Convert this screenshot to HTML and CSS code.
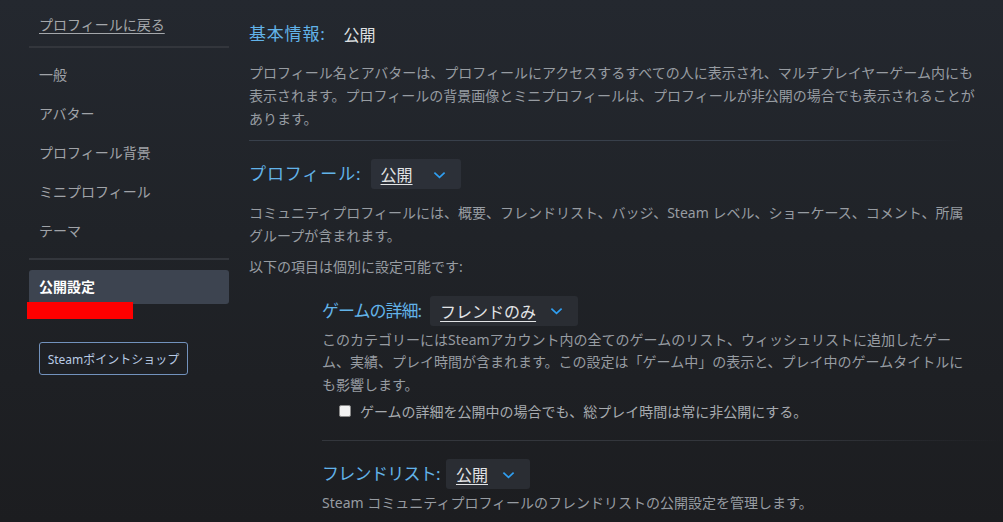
FILE: index.html
```html
<!DOCTYPE html>
<html lang="ja">
<head>
<meta charset="utf-8">
<title>プライバシー設定</title>
<link rel="stylesheet" href="styles.css">
</head>
<body>
<div class="page">
  <nav class="sidebar">
    <a class="back-link">プロフィールに戻る</a>
    <div class="side-divider"></div>
    <ul class="side-list">
      <li class="side-item">一般</li>
      <li class="side-item">アバター</li>
      <li class="side-item">プロフィール背景</li>
      <li class="side-item">ミニプロフィール</li>
      <li class="side-item">テーマ</li>
    </ul>
    <div class="side-divider second"></div>
    <div class="side-active">公開設定</div>
    <div class="redact"></div>
    <button class="points-btn">Steamポイントショップ</button>
  </nav>

  <main class="content">
    <div class="head-row first">
      <span class="label l-basic">基本情報:</span>
      <span class="static-value">公開</span>
    </div>
    <p class="desc p1">プロフィール名とアバターは、プロフィールにアクセスするすべての人に表示され、マルチプレイヤーゲーム内にも<br>表示されます。プロフィールの背景画像とミニプロフィールは、プロフィールが非公開の場合でも表示されることが<br>あります。</p>
    <div class="divider d1"></div>

    <div class="head-row r2">
      <span class="label l-profile">プロフィール:</span>
      <span class="dropdown w-profile"><span class="dd-text">公開</span><svg class="chev" viewBox="0 0 14 8" width="13" height="8"><path d="M1.5 1.5 L7 6.5 L12.5 1.5" fill="none" stroke="#2f9ff2" stroke-width="1.8"/></svg></span>
    </div>
    <p class="desc p2">コミュニティプロフィールには、概要、フレンドリスト、バッジ、Steam レベル、ショーケース、コメント、所属<br>グループが含まれます。</p>
    <p class="desc p3">以下の項目は個別に設定可能です:</p>

    <section class="sub">
      <div class="head-row r3">
        <span class="label l-game">ゲームの詳細:</span>
        <span class="dropdown w-game"><span class="dd-text">フレンドのみ</span><svg class="chev" viewBox="0 0 14 8" width="13" height="8"><path d="M1.5 1.5 L7 6.5 L12.5 1.5" fill="none" stroke="#2f9ff2" stroke-width="1.8"/></svg></span>
      </div>
      <p class="desc p4">このカテゴリーにはSteamアカウント内の全てのゲームのリスト、ウィッシュリストに追加したゲー<br>ム、実績、プレイ時間が含まれます。この設定は「ゲーム中」の表示と、プレイ中のゲームタイトルに<br>も影響します。</p>
      <label class="check-row"><span class="checkbox"></span><span>ゲームの詳細を公開中の場合でも、総プレイ時間は常に非公開にする。</span></label>
      <div class="divider d2"></div>
      <div class="head-row r4">
        <span class="label l-friend">フレンドリスト:</span>
        <span class="dropdown w-friend"><span class="dd-text">公開</span><svg class="chev" viewBox="0 0 14 8" width="13" height="8"><path d="M1.5 1.5 L7 6.5 L12.5 1.5" fill="none" stroke="#2f9ff2" stroke-width="1.8"/></svg></span>
      </div>
      <p class="desc p5">Steam コミュニティプロフィールのフレンドリストの公開設定を管理します。</p>
    </section>
  </main>
</div>
</body>
</html>
```

FILE: styles.css
```css
* { box-sizing: border-box; }
html, body {
  margin: 0;
  padding: 0;
  height: 100%;
}
body {
  background: linear-gradient(180deg, #24282f 0%, #202328 45%, #1c1d20 100%);
  font-family: "Noto Sans", "Noto Sans CJK JP", sans-serif;
  color: #9a9ea4;
  overflow: hidden;
}
.page {
  display: flex;
  width: 1003px;
  height: 522px;
}
.sidebar {
  width: 229px;
  padding-left: 29px;
  display: flex;
  flex-direction: column;
  flex-shrink: 0;
}
.back-link {
  display: block;
  padding-left: 10px;
  margin-top: 14px;
  font-size: 14px;
  line-height: 22px;
  color: #a4a7ab;
  text-decoration: underline;
  text-underline-offset: 3px;
}
.side-divider {
  height: 2px;
  background: #33363c;
  margin-top: 10px;
  width: 200px;
}
.side-list {
  list-style: none;
  margin: 0;
  padding: 0;
  margin-top: 16px;
}
.side-item {
  padding-left: 10px;
  height: 39px;
  line-height: 22px;
  font-size: 14px;
  color: #a0a3a8;
}
.side-divider.second {
  margin-top: -1px;
}
.side-active {
  margin-top: 10px;
  width: 200px;
  height: 34px;
  border-radius: 3px;
  background: #3d4450;
  color: #ffffff;
  font-size: 14px;
  font-weight: 700;
  line-height: 34px;
  padding-left: 10px;
}
.redact {
  width: 106px;
  height: 17px;
  background: #ff0000;
  margin-top: -2px;
  margin-left: -2px;
}
.points-btn {
  margin-top: 23px;
  margin-left: 10px;
  width: 149px;
  height: 33px;
  background: transparent;
  border: 1px solid #7292bd;
  border-radius: 3px;
  color: #b9cbe4;
  font-family: "Noto Sans", "Noto Sans CJK JP", sans-serif;
  font-size: 12px;
  padding: 0;
  text-align: center;
}
.content {
  margin-left: 20px;
  width: 754px;
  flex-shrink: 0;
}
.head-row {
  display: flex;
  align-items: center;
  height: 30px;
}
.head-row.first { margin-top: 19px; }
.label {
  color: #62b3e9;
  font-size: 17px;
  line-height: 30px;
  white-space: nowrap;
}
.l-basic { letter-spacing: 0.8px; }
.l-profile { letter-spacing: 0.9px; }
.l-game { letter-spacing: -1px; }
.l-friend { letter-spacing: -0.7px; }
.static-value {
  color: #dfe1e3;
  font-size: 16px;
  margin-left: 18px;
}
.dropdown {
  display: inline-flex;
  align-items: center;
  justify-content: space-between;
  height: 30px;
  margin-left: 9px;
  padding: 0 15px 0 10px;
  background: #2c3038;
  border-radius: 3px;
}
.dd-text {
  color: #e2e4e6;
  font-size: 16px;
  text-decoration: underline;
  text-underline-offset: 3px;
  text-decoration-thickness: 1px;
}
.chev { display: block; margin-top: 1px; }
.w-profile { width: 90px; }
.w-game { width: 148px; }
.w-friend { width: 84px; margin-left: 6px; }
.sub .dropdown { background: #2a2d33; }
.desc {
  margin: 0;
  font-size: 14px;
  line-height: 22.5px;
  color: #979ca2;
}
.p1 { margin-top: 12px; line-height: 23px; }
.divider {
  height: 1px;
  background: linear-gradient(90deg, #38404b 0%, #38404b 75%, rgba(56,64,75,0) 100%);
}
.d1 { margin-top: 10px; width: 715px; }
.r2 { margin-top: 18px; }
.p2 { margin-top: 13px; }
.p3 { margin-top: 9px; }
.sub {
  margin-left: 73px;
}
.r3 { margin-top: 17px; }
.p4 { margin-top: 3px; }
.check-row {
  display: flex;
  align-items: center;
  margin-top: 3px;
  padding-left: 17px;
  height: 23px;
  font-size: 14px;
  color: #a7abb0;
}
.checkbox {
  width: 12px;
  height: 12px;
  background: #f2f2f2;
  border: 1px solid #8a8a8a;
  border-radius: 2px;
  margin-right: 9px;
  flex-shrink: 0;
}
.d2 {
  margin-top: 18px;
  width: 681px;
  background: linear-gradient(90deg, #33363c 0%, #33363c 70%, rgba(51,54,60,0) 100%);
}
.r4 { margin-top: 18px; }
.p5 { margin-top: 3px; }
```
